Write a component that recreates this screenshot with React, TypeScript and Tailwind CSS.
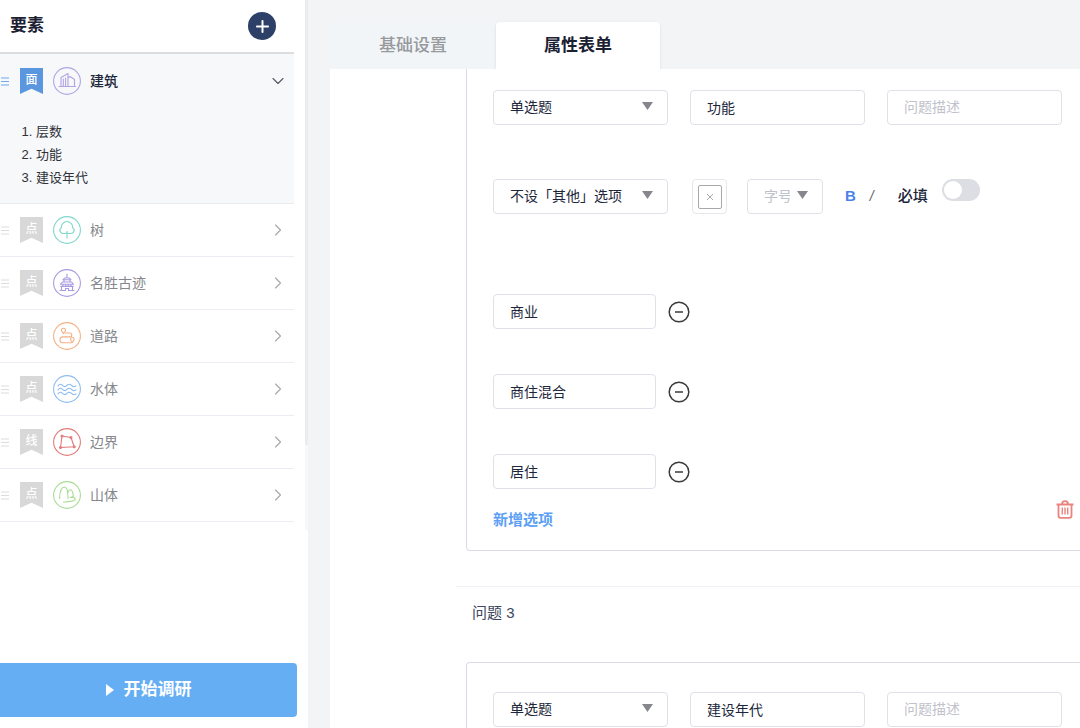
import { FC, ReactNode, useState } from "react";
import { Plus, ChevronDown, ChevronRight } from "lucide-react";

type Layer = {
  name: string;
  kind: string;
  color: string;
  icon: ReactNode;
};

const layers: Layer[] = [
  {
    name: "树",
    kind: "点",
    color: "text-[#7fd6cb]",
    icon: (
      <>
        <path d="M14 22v-6.5" />
        <path d="M11 17.5c-4 .6-5.500-4-2.700-5.800-.2-3.200 2.500-6.200 5.700-6.200s5.900 3 5.700 6.200c2.800 1.800 1.300 6.400-2.700 5.800-1.800-.3-4.200-.3-6 0z" />
      </>
    ),
  },
  {
    name: "名胜古迹",
    kind: "点",
    color: "text-[#a99be2]",
    icon: (
      <>
        <path d="M14 5v3.500M11.500 9h5l1.500 1.800h-8z" />
        <path d="M11 11v2M17 11v2M9.500 13h9l2 2.200h-13z" />
        <path d="M10 15.500v2M18 15.500v2M12.700 15.500v2M15.300 15.500v2M7.800 17.400h12.400" />
        <path d="M8.500 17.500v4M19.500 17.500v4M12.500 21.500v-2h3v2M7 21.500h5.500M15.500 21.500H21" />
      </>
    ),
  },
  {
    name: "道路",
    kind: "点",
    color: "text-[#f5b083]",
    icon: (
      <>
        <path d="M10.500 11.500c-1.600-1.700-2-2.400-2-3.200a2 2 0 0 1 4 0c0 .8-.5 1.700-2 3.200z" />
        <path d="M12.500 11h4.300a1.900 1.900 0 0 1 0 3.900H9.800a2.900 2.900 0 0 0 0 5.800h9" />
        <path d="M19.300 20.500c-1.200-1.500-1.700-2.300-1.700-3.200a1.700 1.700 0 0 1 3.500 0c0 .9-.5 1.800-1.800 3.200z" />
      </>
    ),
  },
  {
    name: "水体",
    kind: "点",
    color: "text-[#8dbcf0]",
    icon: (
      <>
        <path d="M5 10.800q2.200-2.800 4.500-.4t4.500 0 4.500 0 4.500.4" />
        <path d="M5 14.800q2.200-2.800 4.500-.4t4.500 0 4.500 0 4.500.4" />
        <path d="M5 18.800q2.200-2.800 4.500-.4t4.500 0 4.500 0 4.500.4" />
      </>
    ),
  },
  {
    name: "边界",
    kind: "线",
    color: "text-[#e27a78]",
    icon: (
      <>
        <path d="M9 8l9 1.500 3.200 9.200-13.700.8z" />
        <circle cx="9" cy="8" r="1" />
        <circle cx="18" cy="9.5" r="1" />
        <circle cx="21.2" cy="18.7" r="1" />
        <circle cx="7.5" cy="19.5" r="1" />
      </>
    ),
  },
  {
    name: "山体",
    kind: "点",
    color: "text-[#a9dc93]",
    icon: (
      <path d="M6.5 17.500c.3-6 2-11.500 5-11.500 2.600 0 3.500 5.500 3.500 11.500M15 11.500c.5-1.700 1.300-2.700 2.300-2.700 2 0 3 3.200 2.900 6.700l-3 1c2.500-.3 4.700.2 5 1.700.2 1.200-2 1.800-5 2.200l-6.700.9" />
    ),
  },
];

const LayerIcon: FC<{ color: string; children: ReactNode }> = ({ color, children }) => (
  <svg
    viewBox="0 0 28 28"
    className={"ml-[10px] size-7 shrink-0 " + color}
    fill="none"
    stroke="currentColor"
    strokeWidth="1.1"
    strokeLinecap="round"
    strokeLinejoin="round"
  >
    <circle cx="14" cy="14" r="13.4" />
    {children}
  </svg>
);

const DragHandle: FC<{ color: string }> = ({ color }) => (
  <svg viewBox="0 0 10 9" className={"h-[9px] w-[10px] shrink-0 " + color} stroke="currentColor">
    <path d="M1 1h8M1 4.500h8M1 8h8" />
  </svg>
);

const Ribbon: FC<{ active?: boolean; children: ReactNode }> = ({ active, children }) => (
  <span
    className={
      "ml-[10px] h-[26px] w-[23px] shrink-0 pt-[2px] text-center text-[12px] leading-5 font-medium text-white [clip-path:polygon(0_0,100%_0,100%_100%,50%_80%,0_100%)] " +
      (active ? "bg-[#5b97df]" : "bg-[#d8d8d8]")
    }
  >
    {children}
  </span>
);

const Caret = () => (
  <svg viewBox="0 0 11 8" className="pointer-events-none absolute top-3 right-[15px] h-2 w-[11px] fill-[#85878c]">
    <path d="M0 0h11L5.500 8z" />
  </svg>
);

const SelectBox: FC<{ label: string; options: string[] }> = ({ label, options }) => (
  <div className="relative w-[175px] shrink-0">
    <select
      aria-label={label}
      className="block h-[35px] w-full appearance-none rounded border border-[#dfe1e9] bg-white pr-8 pl-4 text-[14px] text-[#20263a]"
    >
      {options.map((o) => (
        <option key={o}>{o}</option>
      ))}
    </select>
    <Caret />
  </div>
);

const inputStyle =
  "h-[35px] shrink-0 rounded border border-[#dfe1e9] bg-white px-4 pb-[2px] text-[14px] text-[#20263a] placeholder:text-[#bfc2ca]";

const QuestionHead: FC<{ title: string }> = ({ title }) => (
  <div className="flex gap-[22px]">
    <SelectBox label="题型" options={["单选题", "多选题"]} />
    <input aria-label="问题" defaultValue={title} className={inputStyle + " w-[175px]"} />
    <input aria-label="问题描述" placeholder="问题描述" className={inputStyle + " w-[175px]"} />
  </div>
);

const Sidebar = () => (
  <aside className="flex w-[308px] shrink-0 flex-col bg-white">
    <div className="flex justify-between">
      <div className="w-[294px]">
        <div className="flex h-[54px] items-center justify-between border-b-2 border-[#dcdddf] pr-[18px] pl-[10px]">
          <h1 className="text-[17px] font-bold text-[#1b2032]">要素</h1>
          <button aria-label="新增" className="flex size-7 items-center justify-center rounded-full bg-[#2d4168] text-white">
            <Plus size={19} strokeWidth={2.5} />
          </button>
        </div>

        <div className="border-b border-[#e9edf2] bg-[#f6f8fa] pb-[14px]">
          <button className="flex h-[54px] w-full items-center pr-[6px] text-left">
            <DragHandle color="text-[#6fa8ec]" />
            <Ribbon active>面</Ribbon>
            <LayerIcon color="text-[#b3a3e3]">
              <path d="M6 19.500h16.500M8 19.500v-9l7-4v13M10.300 19.500v-7.500M12.600 19.500v-8.500M15 11l2-1.500 4.500 3v7" />
            </LayerIcon>
            <span className="ml-[9px] flex-1 text-[14px] font-medium text-[#20263a]">建筑</span>
            <ChevronDown size={20} strokeWidth={1.3} className="text-[#55585f]" />
          </button>
          <ol className="mt-3 list-decimal pl-9 text-[13px] leading-[23px] text-[#303238]">
            <li>层数</li>
            <li>功能</li>
            <li>建设年代</li>
          </ol>
        </div>

        {layers.map((layer) => (
          <button key={layer.name} className="flex h-[53px] w-full items-center border-b border-[#ebedf4] pr-[6px] text-left">
            <DragHandle color="text-[#dcdcdc]" />
            <Ribbon>{layer.kind}</Ribbon>
            <LayerIcon color={layer.color}>{layer.icon}</LayerIcon>
            <span className="ml-[9px] flex-1 text-[14px] text-[#85878c]">{layer.name}</span>
            <ChevronRight size={20} strokeWidth={1.3} className="text-[#a5a7ac]" />
          </button>
        ))}
      </div>
      {/* scroll track */}
      <div className="-mb-2 w-[3px] bg-[#f8f8f8]">
        <div className="h-[84%] bg-[#ececec]" />
      </div>
    </div>

    <button className="mt-auto mr-[11px] mb-[11px] flex h-[54px] items-center justify-center gap-[10px] rounded-r bg-[#65aef4] text-[17px] font-bold text-white">
      <svg viewBox="0 0 8 12" className="h-3 w-2 fill-white">
        <path d="M0 0l8 6-8 6z" />
      </svg>
      开始调研
    </button>
  </aside>
);

const App = () => {
  const [choices, setChoices] = useState(["商业", "商住混合", "居住"]);
  const [required, setRequired] = useState(false);

  return (
    <div className="flex h-screen overflow-hidden bg-[#f3f4f6] font-['Liberation_Sans','Noto_Sans_CJK_SC',sans-serif]">
      <Sidebar />

      <main className="ml-[22px] flex min-w-0 flex-1 flex-col pt-[22px]">
        <nav className="flex h-[47px] shrink-0 text-[17px]">
          <button className="w-[166px] bg-[#f1f5f8] font-medium text-[#97999c]">基础设置</button>
          <button className="w-[164px] rounded-t bg-white font-bold text-[#1b2032] shadow-sm">属性表单</button>
        </nav>

        <div className="relative flex-1 overflow-hidden bg-white pl-[126px]">
          <section className="relative ml-[10px] rounded-bl border-b border-l border-[#d9dce6] pt-[21px] pb-5 pl-[26px]">
            <QuestionHead title="功能" />

            <div className="mt-[54px] flex h-[35px] items-center">
              <SelectBox label="其他选项" options={["不设「其他」选项", "设「其他」选项"]} />
              <button
                aria-label="颜色"
                className="ml-6 flex size-[35px] shrink-0 items-center justify-center rounded border border-[#e6e7ec]"
              >
                <svg viewBox="0 0 24 24" className="size-6" fill="none" stroke="#a8a8a8">
                  <rect x="0.5" y="0.5" width="23" height="23" rx="1.5" />
                  <path d="M9 9l6 6M15 9l-6 6" />
                </svg>
              </button>
              <div className="relative ml-5 w-[76px] shrink-0">
                <select
                  aria-label="字号"
                  className="block h-[35px] w-full appearance-none rounded border border-[#dfe1e9] bg-white pr-8 pl-4 text-[14px] text-[#bfc2ca]"
                >
                  <option>字号</option>
                </select>
                <Caret />
              </div>
              <button className="ml-[22px] text-[15px] font-bold text-[#4c82e8]">B</button>
              <button className="ml-[14px] text-[14px] text-[#606266] italic">/</button>
              <label htmlFor="required" className="ml-6 text-[15px] font-medium text-[#20263a]">
                必填
              </label>
              <input
                id="required"
                type="checkbox"
                role="switch"
                checked={required}
                onChange={(e) => setRequired(e.target.checked)}
                className="ml-[14px] h-[22px] w-[38px] shrink-0 appearance-none self-start rounded-full bg-[#dcdee4] p-[2px] before:block before:size-[18px] before:rounded-full before:bg-white checked:bg-[#65aef4] checked:before:ml-4"
              />
            </div>

            <ul className="mt-20 flex flex-col gap-[45px]">
              {choices.map((choice) => (
                <li key={choice} className="flex items-center gap-3">
                  <input aria-label="选项" defaultValue={choice} className={inputStyle + " w-[163px]"} />
                  <button aria-label="删除选项" onClick={() => setChoices(choices.filter((c) => c !== choice))}>
                    <svg viewBox="0 0 22 22" className="size-[22px]" fill="none" stroke="#3a3a3a" strokeWidth="1.5">
                      <circle cx="11" cy="11" r="9.8" />
                      <path d="M7 11h8" />
                    </svg>
                  </button>
                </li>
              ))}
            </ul>

            <button className="mt-[21px] block text-[15px] leading-5 font-bold text-[#5c9ff5]">新增选项</button>

            <button aria-label="删除问题" className="absolute right-[6px] bottom-[31px]">
              <svg viewBox="0 0 18 19" className="h-[19px] w-[18px]" fill="none" stroke="#ea847e" strokeWidth="1.8">
                <path d="M0.5 4.500h17M6 4c0-2 1-2.800 3-2.800s3 .8 3 2.800M2.500 4.500v11.300c0 1.300.7 2 2 2h9c1.300 0 2-.7 2-2V4.500" />
                <path d="M6.300 7.500v7M9 7.500v7M11.700 7.500v7" strokeWidth="1.4" />
              </svg>
            </button>
          </section>

          <h2 className="mt-[35px] border-t border-[#eff1f7] pt-[15px] pl-4 text-[15px] leading-[22px] text-[#3c4660]">问题 3</h2>

          <section className="mt-[38px] ml-[10px] rounded-tl border-t border-l border-[#d9dce6] pt-[29px] pb-10 pl-[26px]">
            <QuestionHead title="建设年代" />
          </section>
        </div>
      </main>
    </div>
  );
};

export default App;
